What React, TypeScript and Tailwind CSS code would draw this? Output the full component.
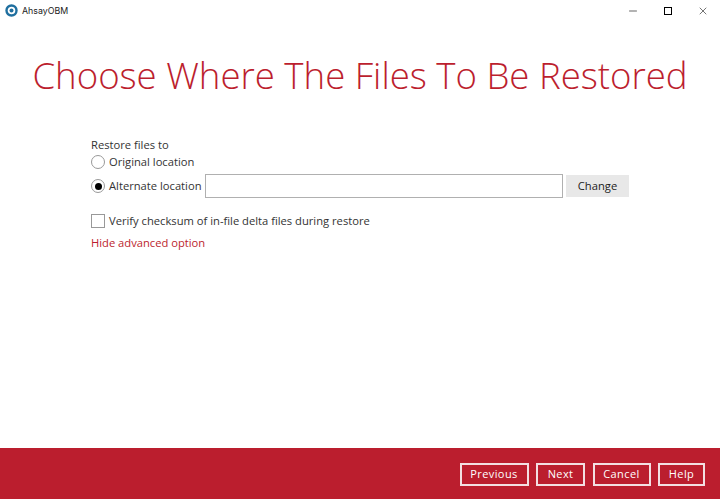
import { Minus, X } from "lucide-react";

function FooterButton({ label, width }: { label: string; width: string }) {
  return (
    <button className={`${width} h-[23px] border-2 border-[#f3dfe2] text-white text-[11px] tracking-[0.4px] flex items-center justify-center`}>
      {label}
    </button>
  );
}

export default function App() {
  return (
    <div className="w-[720px] h-[499px] bg-white flex flex-col overflow-hidden font-['Open_Sans',sans-serif] text-[#333333]">
      {/* title bar */}
      <div className="h-[21px] flex items-center pl-[5px] shrink-0">
        <svg width="13" height="13" viewBox="0 0 13 13" className="mr-[4px]">
          <circle cx="6.5" cy="6.5" r="5" fill="none" stroke="#1f6f9f" strokeWidth="2.4" />
          <circle cx="6.5" cy="6.5" r="2" fill="#1f6f9f" />
        </svg>
        <span className="text-[8.8px] text-[#222222] font-['Inter',sans-serif]">AhsayOBM</span>
        <div className="ml-auto flex items-center text-black">
          <Minus size={12} strokeWidth={1.2} className="mr-[25px]" />
          <div className="w-[8px] h-[8px] border border-black mr-[25px]" />
          <X size={12} strokeWidth={1.1} className="mr-[11px]" />
        </div>
      </div>

      {/* heading */}
      <h1 className="mt-[29px] text-center text-[36.6px] leading-[50px] font-light text-[#bc1e2e]">
        Choose Where The Files To Be Restored
      </h1>

      {/* form */}
      <div className="mt-[16px] pl-[91px] flex flex-col text-[11.2px]">
        <div className="mt-[21px] leading-[15px] h-[15px]">Restore files to</div>
        <label className="mt-[1px] h-[18px] flex items-center gap-[4px]">
          <span className="w-[14px] h-[14px] rounded-full border border-[#999999]" />
          <span>Original location</span>
        </label>
        <div className="mt-[3px] flex items-center">
          <span className="w-[14px] h-[14px] rounded-full border border-[#999999] flex items-center justify-center mr-[4px] shrink-0">
            <span className="w-[7px] h-[7px] rounded-full bg-black" />
          </span>
          <span className="w-[96px] shrink-0 whitespace-nowrap">Alternate location</span>
          <div className="w-[358px] h-[24px] border border-[#b0b0b0] bg-white shrink-0" />
          <button className="ml-[3px] w-[63px] h-[22px] bg-[#e8e8e8] text-[#222222] flex items-center justify-center shrink-0">
            Change
          </button>
        </div>
        <label className="mt-[15px] flex items-center gap-[4px] h-[16px]">
          <span className="w-[14px] h-[14px] border border-[#999999]" />
          <span>Verify checksum of in-file delta files during restore</span>
        </label>
        <div className="mt-[6px] text-[#bc1e2e] leading-[16px]">Hide advanced option</div>
      </div>

      {/* footer */}
      <div className="mt-auto h-[51px] bg-[#bb1e2e] flex items-center justify-end gap-[7.5px] pr-[15px] pt-[2px] shrink-0">
        <FooterButton label="Previous" width="w-[69px]" />
        <FooterButton label="Next" width="w-[49px]" />
        <FooterButton label="Cancel" width="w-[58px]" />
        <FooterButton label="Help" width="w-[47px]" />
      </div>
    </div>
  );
}
